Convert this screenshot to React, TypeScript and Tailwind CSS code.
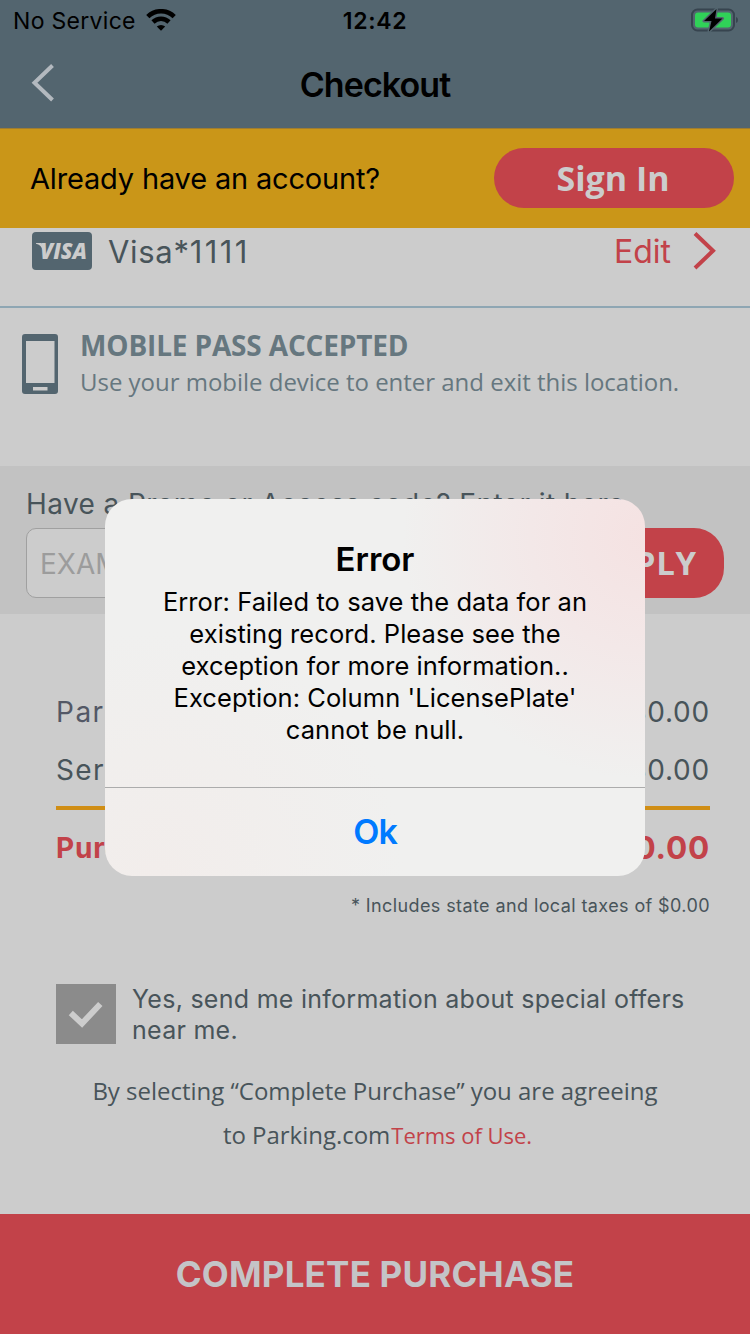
import React from "react";

const sans = "font-['Inter',sans-serif]";
const open = "font-['Open_Sans',sans-serif]";

function StatusBar() {
  return (
    <div className="flex h-10 items-center justify-between pl-[13px] pr-[11px]">
      <div className="flex w-[300px] items-center gap-[10px]">
        <span className="pt-[2px] text-[23px] leading-10 tracking-[0.3px]">No Service</span>
        <svg width="30" height="22" viewBox="0 0 30 22" fill="none" stroke="#000" strokeWidth="4.600">
          <path d="M1.800 7.600a18.900 18.900 0 0 1 26.400 0" />
          <path d="M7 13a11.500 11.500 0 0 1 16 0" />
          <path d="M10.800 17.600a6.200 6.200 0 0 1 8.400 0L15 21.800z" fill="#000" stroke="none" />
        </svg>
      </div>
      <span className="-ml-[2px] pt-[2px] text-[23px] font-semibold leading-10 tracking-[0.7px]">12:42</span>
      <div className="flex w-[300px] justify-end">
        <svg width="49" height="26" viewBox="0 0 49 26">
          <rect x="2" y="2.500" width="42" height="21" rx="5.500" fill="none" stroke="#37444f" strokeWidth="2" />
          <path d="M46 10q2 .6 2 3t-2 3z" fill="#37444f" />
          <rect x="5" y="5.500" width="36" height="15" rx="3" fill="#30d158" />
          <path d="M26.500 2 14 14h7.500L19 24.500 32.500 11.500H25z" fill="#000" stroke="#53656f" strokeWidth="3" paintOrder="stroke" strokeLinejoin="round" />
        </svg>
      </div>
    </div>
  );
}

function Header() {
  return (
    <header className="h-32 bg-[#53656f] text-black">
      <StatusBar />
      <div className="flex h-[88px] items-center justify-between px-[30px]">
        <svg className="w-[40px]" width="40" height="40" viewBox="0 0 40 40" fill="none" stroke="#b3b9bf" strokeWidth="4">
          <path d="M22.500 1.500 4.500 18.800 22.500 36" />
        </svg>
        <h1 className="pt-px text-[34px] font-semibold leading-[88px] tracking-[-0.9px]">Checkout</h1>
        <div className="w-[40px]" />
      </div>
    </header>
  );
}

function SignInBanner() {
  return (
    <div className="flex h-[100px] items-center justify-between border-t border-[#a07d30] bg-[#ca9618] pb-px pl-[30px] pr-4">
      <span className="pt-px text-[29px] leading-[40px] tracking-[-0.17px] text-black">Already have an account?</span>
      <button className={`${open} h-[60px] w-[240px] rounded-full bg-[#c24249] pr-[2px] text-[34px] font-bold leading-[60px] text-[#cccccc]`}>
        Sign In
      </button>
    </div>
  );
}

function PaymentRow() {
  return (
    <div className="flex h-20 items-start border-b-2 border-[#8ea6b3] pl-8 pr-[33px] pt-1">
      <svg width="60" height="38" viewBox="0 0 60 38">
        <rect width="60" height="38" rx="4" fill="#53656f" />
        <path d="M4 11h5.500l3 7-2-.5Q9 13 4 11.800z" fill="#cccccc" />
        <text x="8" y="27" fill="#cccccc" fontFamily="Open Sans" fontSize="22" fontWeight="800" fontStyle="italic" textLength="47" lengthAdjust="spacingAndGlyphs">VISA</text>
      </svg>
      <span className="ml-4 text-[31px] leading-[40px] tracking-[0.7px] text-[#48545a]">
        Visa*<span className="tracking-[2.400px]">1111</span>
      </span>
      <span className="ml-auto text-[32px] leading-[39px] text-[#c24249]">Edit</span>
      <svg className="ml-[22px]" width="24" height="38" viewBox="0 0 24 38" fill="none" stroke="#c24249" strokeWidth="4">
        <path d="M2 1.500 20 18.800 2 36" />
      </svg>
    </div>
  );
}

function MobilePass() {
  return (
    <section className="flex h-[158px] items-start gap-[22px] pl-[22px] pt-[19px] text-[#66777f]">
      <svg className="mt-[7px]" width="36" height="60" viewBox="0 0 36 60">
        <path fillRule="evenodd" fill="#53656f" d="M3 0h30q3 0 3 3v54q0 3-3 3H3q-3 0-3-3V3q0-3 3-3zM4 7v42h28.500V7zM11 53v3.500h14.500V53z" />
      </svg>
      <div className={open}>
        <h2 className="text-[28px] font-bold leading-[36px] tracking-[-0.15px]">MOBILE PASS ACCEPTED</h2>
        <p className="mt-px text-[24px] leading-[36px] tracking-[-0.02px]">Use your mobile device to enter and exit this location.</p>
      </div>
    </section>
  );
}

function PromoCode() {
  return (
    <section className="h-[148px] bg-[#c2c2c2] px-[26px] pt-[19px]">
      <label className="block whitespace-nowrap text-[28px] leading-[38px] tracking-[0.4px] text-[#48545a]">
        Have a Promo or Access code? Enter it here
      </label>
      <div className="mt-[5px] flex justify-between">
        <div className="h-[70px] w-[486px] rounded-[10px] border border-[#a0a0a0] bg-[#cccccc] pl-[13px] text-[28px] leading-[70px] text-[#9c9c9c]">
          EXAMPLE
        </div>
        <button className={`${open} h-[70px] w-[196px] rounded-[30px] bg-[#c24249] pr-[27px] text-right text-[33px] font-bold leading-[70px] tracking-[0.8px] text-[#cccccc]`}>
          APPLY
        </button>
      </div>
    </section>
  );
}

function Totals() {
  return (
    <section className="mx-10 pl-4 pt-[68px] text-[28px] tracking-[0.8px] text-[#48545a]">
      <div className="flex h-[58px] justify-between leading-[60px]">
        <span className="tracking-[1.500px] text-[#535866]">Parking</span>
        <span>$0.00</span>
      </div>
      <div className="flex h-[58px] justify-between leading-[60px]">
        <span className="tracking-[1.300px]">Service Fee</span>
        <span>$0.00</span>
      </div>
      <div className="mt-2 h-1 bg-[#d08e15]" />
      <div className="flex h-[76px] justify-between font-bold leading-[76px] text-[#c24249]">
        <span className="tracking-[0.9px]">Purchase Total*</span>
        <span className="text-[31.500px]">$0.00</span>
      </div>
      <p className="text-right text-[18px] leading-[39px] tracking-[0.4px]">* Includes state and local taxes of $0.00</p>
    </section>
  );
}

function Consent() {
  return (
    <section className="pt-[59px] text-[#48545a]">
      <div className="flex gap-4 pl-14">
        <svg width="60" height="60" viewBox="0 0 60 60" fill="none">
          <rect width="60" height="60" fill="#8b8b8b" />
          <path d="M14.800 29 26 39.500 44.300 20" stroke="#cccccc" strokeWidth="6" />
        </svg>
        <p className="whitespace-nowrap text-[25px] leading-[31px] tracking-[0.27px]">
          Yes, send me information about special offers
          <br />
          near me.
        </p>
      </div>
      <p className={`${open} mt-[23px] text-center text-[24px] leading-[44px] tracking-[-0.02px]`}>
        By selecting “Complete Purchase” you are agreeing
        <br />
        <span className="pl-[5px]">to Parking.com</span>
        <span className="pl-px text-[22px] text-[#c24249]">Terms of Use.</span>
      </p>
    </section>
  );
}

function ErrorAlert() {
  return (
    <div className="absolute left-[105px] top-[499px] flex h-[377px] w-[540px] flex-col overflow-hidden rounded-[27px] bg-[#f0f0ef] bg-[radial-gradient(circle_at_100%_10%,#f5e2e2_0%,#f3e8e8_18%,transparent_38%),radial-gradient(circle_at_10%_100%,#f2edeb_0%,transparent_40%)] text-center text-black">
      <div className="h-[288px] pt-[38px]">
        <h2 className="text-[33px] font-semibold leading-[44px]">Error</h2>
        <p className="mt-[5px] whitespace-nowrap text-[25.500px] leading-[32px] tracking-[0.06px]">
          Error: Failed to save the data for an
          <br />
          existing record. Please see the
          <br />
          exception for more information..
          <br />
          Exception: Column 'LicensePlate'
          <br />
          cannot be null.
        </p>
      </div>
      <button className="flex-1 border-t border-[#acacac] text-[34px] font-semibold leading-[88px] tracking-[-1px] text-[#007aff]">Ok</button>
    </div>
  );
}

export default function App() {
  return (
    <main className={`${sans} relative flex h-[1334px] w-[750px] flex-col overflow-hidden bg-[#cccccc]`}>
      <Header />
      <SignInBanner />
      <PaymentRow />
      <MobilePass />
      <PromoCode />
      <Totals />
      <Consent />
      <button className="mt-auto h-[120px] shrink-0 bg-[#c24249] text-[35px] font-bold leading-[120px] tracking-[0.2px] text-[#c4c4c7]">
        COMPLETE PURCHASE
      </button>
      <ErrorAlert />
    </main>
  );
}
